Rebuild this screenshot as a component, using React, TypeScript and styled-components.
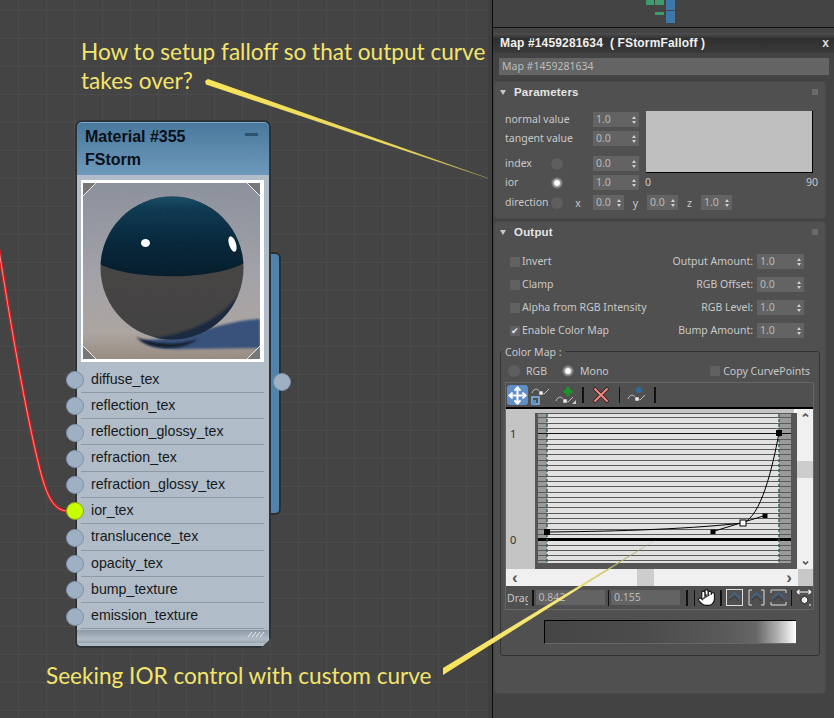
import styled, { createGlobalStyle } from 'styled-components'
import { Hand, Move } from 'lucide-react'

const GlobalStyle = createGlobalStyle`
  html, body {
    margin: 0;
    background: #444;
    overflow: hidden;
  }
  * {
    box-sizing: border-box;
  }
`

const socketNames = [
  'diffuse_tex',
  'reflection_tex',
  'reflection_glossy_tex',
  'refraction_tex',
  'refraction_glossy_tex',
  'ior_tex',
  'translucence_tex',
  'opacity_tex',
  'bump_texture',
  'emission_texture',
]

const outputRows = [
  { check: 'Invert', label: 'Output Amount:', value: '1.0', checked: false },
  { check: 'Clamp', label: 'RGB Offset:', value: '0.0', checked: false },
  { check: 'Alpha from RGB Intensity', label: 'RGB Level:', value: '1.0', checked: false },
  { check: 'Enable Color Map', label: 'Bump Amount:', value: '1.0', checked: true },
]

const gridLines = Array.from({ length: 28 }, (_, i) => Math.round(417.3 + i * 5.3) + 0.5)

const wirePath = 'M-1 250 C 10 320 25 410 40 470 C 46 492 52 511 68 511'

const Spinner = ({ value, width = 46 }: { value: string; width?: number }): JSX.Element => (
  <SpinnerBox $width={width}>
    <span>{value}</span>
    <SpinnerArrows>
      <ArrowUp />
      <ArrowDown />
    </SpinnerArrows>
  </SpinnerBox>
)

const SpherePreview = (): JSX.Element => (
  <PreviewSvg viewBox="83 183 177 176">
    <defs>
      <linearGradient id="wall" x1="0" y1="0" x2="0" y2="1">
        <stop offset="0" stopColor="#8b919d" />
        <stop offset="0.55" stopColor="#a3a2a8" />
        <stop offset="0.85" stopColor="#aca5a0" />
        <stop offset="1" stopColor="#978b80" />
      </linearGradient>
      <linearGradient id="glass" x1="0" y1="0" x2="0" y2="1">
        <stop offset="0" stopColor="#1b5472" />
        <stop offset="0.22" stopColor="#0c3850" />
        <stop offset="0.6" stopColor="#04253a" />
        <stop offset="1" stopColor="#021a29" />
      </linearGradient>
      <linearGradient id="base" x1="0" y1="0" x2="0" y2="1">
        <stop offset="0" stopColor="#494745" />
        <stop offset="1" stopColor="#403f3f" />
      </linearGradient>
      <clipPath id="ball">
        <circle cx="172" cy="268" r="71.5" />
      </clipPath>
      <filter id="soft">
        <feGaussianBlur stdDeviation="1.2" />
      </filter>
      <filter id="grain">
        <feTurbulence type="fractalNoise" baseFrequency="1.1" numOctaves="2" />
        <feColorMatrix type="saturate" values="0" />
      </filter>
    </defs>
    <rect x="83" y="183" width="177" height="176" fill="url(#wall)" />
    <path d="M140 340 C 190 340 222 320 260 319 L260 348 L185 349 C 165 350 148 348 140 340 Z" fill="#34507a" filter="url(#soft)" />
    <circle cx="172" cy="268" r="71.5" fill="url(#base)" />
    <g clipPath="url(#ball)">
      <path d="M96 262 C 125 281 215 281 246 262 L246 190 L96 190 Z" fill="url(#glass)" />
      <path d="M152 338 C 192 334 224 316 238 295 L246 330 L170 345 Z" fill="#16283c" filter="url(#soft)" />
    </g>
    <path d="M136 337 C 155 345 178 346 198 339 C 182 351 150 351 136 337 Z" fill="#0a1622" filter="url(#soft)" />
    <ellipse cx="145.5" cy="243" rx="4.5" ry="4" fill="#fff" />
    <ellipse cx="232.5" cy="244" rx="3.5" ry="8" fill="#fff" transform="rotate(-18 232.5 244)" />
    <rect x="83" y="183" width="177" height="176" filter="url(#grain)" opacity="0.05" />
    <path d="M83 183 L96 183 L83 196 Z M260 183 L247 183 L260 196 Z M83 359 L96 359 L83 346 Z M260 359 L247 359 L260 346 Z" fill="#777" />
    <path d="M96 183 L83 196 M247 183 L260 196 M96 359 L83 346 M247 359 L260 346" stroke="#eee" strokeWidth="1" />
  </PreviewSvg>
)

const CurvePlot = (): JSX.Element => (
  <PlotSvg viewBox="506 409 291 160">
    <rect x="506" y="409" width="291" height="160" fill="#c4c4c4" />
    <rect x="535" y="413" width="262" height="156" fill="#565656" />
    <rect x="794" y="409" width="3" height="4" fill="#fff" />
    <rect x="538" y="414" width="253" height="149" fill="#e2e2e2" />
    <rect x="538" y="414" width="9" height="149" fill="#9a9a9a" />
    <rect x="779" y="414" width="12" height="149" fill="#9a9a9a" />
    {gridLines.map((y) => (
      <line key={y} x1="538" x2="791" y1={y} y2={y} stroke="#5a5a5a" strokeWidth="1" />
    ))}
    <line x1="538" x2="791" y1="433.5" y2="433.5" stroke="#111" strokeWidth="1" />
    <line x1="538" x2="791" y1="539.5" y2="539.5" stroke="#000" strokeWidth="3" />
    <line x1="547" x2="547" y1="414" y2="563" stroke="#2b6060" strokeWidth="1.4" strokeDasharray="3 2" />
    <line x1="779" x2="779" y1="414" y2="563" stroke="#2b6060" strokeWidth="1.4" strokeDasharray="3 2" />
    <path d="M547 532 C 600 531.5 680 530 743 523 C 761 516 772 470 779 433" fill="none" stroke="#000" strokeWidth="1" />
    <path d="M713 531.5 L765 515.5" stroke="#000" strokeWidth="1" />
    <rect x="544" y="529" width="6" height="6" fill="#000" />
    <rect x="710.5" y="529.5" width="5" height="4.5" fill="#000" />
    <rect x="762.5" y="513.5" width="5" height="4.5" fill="#000" />
    <rect x="740" y="520" width="6" height="6" fill="#fff" stroke="#000" strokeWidth="1" />
    <rect x="776" y="430" width="6" height="6" fill="#000" />
    <text x="510" y="438" fontFamily="Noto Sans, sans-serif" fontSize="11" fill="#333">1</text>
    <text x="510" y="544" fontFamily="Noto Sans, sans-serif" fontSize="11" fill="#333">0</text>
  </PlotSvg>
)

const CurveGlyph = (): JSX.Element => (
  <>
    <path d="M1 8 C 3 3 6 3 9 7 L13 9 L18 4" fill="none" stroke="#ddd" strokeWidth="0.8" />
    <rect x="8" y="6" width="4" height="4" fill="#eee" stroke="#444" strokeWidth="0.5" />
  </>
)

const ToolbarIcons = {
  scale: (
    <svg width="18" height="20" viewBox="0 0 18 20">
      <CurveGlyph />
      <rect x="1" y="12" width="7" height="7" fill="none" stroke="#7fb2e8" strokeWidth="1.6" />
      <rect x="1" y="15" width="4" height="4" fill="#5a8fc9" />
    </svg>
  ),
  add: (
    <svg width="21" height="20" viewBox="0 0 21 20">
      <g transform="translate(0 8)">
        <CurveGlyph />
      </g>
      <path d="M11.5 2 H14.5 V5 H17.5 V8 H14.5 V11 H11.5 V8 H8.5 V5 H11.5 Z" fill="#159a22" />
      <path d="M21 15 V19 H17 Z" fill="#ccc" />
    </svg>
  ),
  remove: (
    <svg width="16" height="16" viewBox="0 0 16 16">
      <path d="M2 2 L14 14 M14 2 L2 14" stroke="#3a1a1a" strokeWidth="3.6" strokeLinecap="round" />
      <path d="M2 2 L14 14 M14 2 L2 14" stroke="#f08a80" strokeWidth="2" strokeLinecap="round" />
    </svg>
  ),
  reset: (
    <svg width="18" height="18" viewBox="0 0 18 18">
      <g transform="translate(0 5)">
        <CurveGlyph />
      </g>
      <circle cx="12" cy="4" r="3" fill="#2f6aa8" />
    </svg>
  ),
}

const ViewIcon = ({ bracket }: { bracket: boolean }): JSX.Element => (
  <svg width="17" height="17" viewBox="0 0 17 17">
    {bracket ? (
      <path d="M4 1 H1 V16 H4 M13 1 H16 V16 H13" fill="none" stroke="#ddd" strokeWidth="1" />
    ) : (
      <rect x="0.5" y="0.5" width="16" height="16" fill="none" stroke="#ddd" strokeWidth="1" />
    )}
    <path d="M3 9 L8.5 4 L14 9" fill="none" stroke="#3a6a98" strokeWidth="1.3" />
    <path d="M4 11 L8.5 7.5 L13 12" fill="none" stroke="#333" strokeWidth="1.2" strokeDasharray="1.5 1" />
  </svg>
)

const App = (): JSX.Element => {
  return (
    <Page>
      <GlobalStyle />
      <Canvas>
        <WireSvg viewBox="0 0 488 718">
          <path d={wirePath} fill="none" stroke="#c81f1f" strokeWidth="3.4" />
          <path d={wirePath} fill="none" stroke="#ff9a9a" strokeWidth="0.9" />
        </WireSvg>
        <TopNote>
          How to setup falloff so that output curve
          <br />
          takes over?
        </TopNote>
        <BottomNote>Seeking IOR control with custom curve</BottomNote>
        <Node>
          <SideTab>
            <TabSocket />
          </SideTab>
          <NodeHeader>
            <NodeTitle>Material #355</NodeTitle>
            <NodeTitle>FStorm</NodeTitle>
            <Minimize />
          </NodeHeader>
          <NodeBody>
            <PreviewFrame>
              <SpherePreview />
            </PreviewFrame>
            <SocketList>
              {socketNames.map((name) => (
                <SocketRow key={name}>
                  <Socket $active={name === 'ior_tex'} />
                  {name}
                </SocketRow>
              ))}
            </SocketList>
            <NodeGrip>
              <svg width="18" height="6" viewBox="0 0 18 6">
                <path d="M1 6 L5 1 M5 6 L9 1 M9 6 L13 1 M13 6 L17 1" stroke="#eef2f5" strokeWidth="1" />
              </svg>
            </NodeGrip>
          </NodeBody>
        </Node>
      </Canvas>
      <Gutter />
      <Panel>
        <TopBar>
          <svg width="30" height="24" viewBox="0 0 30 24">
            <rect x="0" y="0" width="8" height="5" fill="#3f9a6e" />
            <rect x="9" y="0" width="9" height="5" fill="#3f9a6e" />
            <rect x="9" y="12" width="9" height="3" fill="#3f9a6e" />
            <rect x="20" y="0" width="9" height="10" fill="#3d78a8" />
            <rect x="20" y="11" width="9" height="12" fill="#3d78a8" />
          </svg>
        </TopBar>
        <TitleBar>
          <span>Map #1459281634 &nbsp;( FStormFalloff )</span>
          <CloseMark>x</CloseMark>
        </TitleBar>
        <NameInput>Map #1459281634</NameInput>
        <Rollout $height={136}>
          <RolloutHeader>
            <Triangle />
            <RolloutTitle>Parameters</RolloutTitle>
            <Dots />
          </RolloutHeader>
          <ParamGrid>
            <LabelCell>
              <Text>normal value</Text>
            </LabelCell>
            <Spinner value="1.0" />
            <Swatch />
            <LabelCell>
              <Text>tangent value</Text>
            </LabelCell>
            <Spinner value="0.0" />
            <LabelCell>
              <RadioLabel>index</RadioLabel>
              <Radio />
            </LabelCell>
            <Spinner value="0.0" />
            <LabelCell>
              <RadioLabel>ior</RadioLabel>
              <Radio $on />
            </LabelCell>
            <Spinner value="1.0" />
            <AxisScale>
              <Text>0</Text>
              <Text>90</Text>
            </AxisScale>
          </ParamGrid>
          <DirectionRow>
            <RadioLabel>direction</RadioLabel>
            <Radio />
            <AxisLabel $width={30}>x</AxisLabel>
            <Spinner value="0.0" width={31} />
            <AxisLabel $width={23}>y</AxisLabel>
            <Spinner value="0.0" width={31} />
            <AxisLabel $width={23}>z</AxisLabel>
            <Spinner value="1.0" width={31} />
          </DirectionRow>
        </Rollout>
        <Rollout $height={471} $gap={4}>
          <RolloutHeader>
            <Triangle />
            <RolloutTitle>Output</RolloutTitle>
            <Dots />
          </RolloutHeader>
          <OutputRows>
            {outputRows.map((row) => (
              <OutputRow key={row.check}>
                <CheckLabel>
                  <Checkbox>{row.checked && '✔'}</Checkbox>
                  <Text>{row.check}</Text>
                </CheckLabel>
                <AmountField>
                  <Text>{row.label}</Text>
                  <Spinner value={row.value} width={47} />
                </AmountField>
              </OutputRow>
            ))}
          </OutputRows>
          <Group>
            <GroupLegend>Color Map :</GroupLegend>
            <ModeRow>
              <ModeOption>
                <Radio />
                <Text>RGB</Text>
              </ModeOption>
              <ModeOption>
                <Radio $on />
                <Text>Mono</Text>
              </ModeOption>
              <CopyOption>
                <Checkbox />
                <Text>Copy CurvePoints</Text>
              </CopyOption>
            </ModeRow>
            <CurveFrame>
              <Toolbar>
                <ActiveTool>
                  <Move size={19} color="#fff" strokeWidth={2.6} />
                </ActiveTool>
                <Tool $width={18} $ml={3}>{ToolbarIcons.scale}</Tool>
                <Tool $width={21} $ml={6}>{ToolbarIcons.add}</Tool>
                <Separator $ml={6} />
                <Tool $width={16} $ml={9}>{ToolbarIcons.remove}</Tool>
                <Separator $ml={10} />
                <Tool $width={18} $ml={7}>{ToolbarIcons.reset}</Tool>
                <Separator $ml={9} />
              </Toolbar>
              <ChartRow>
                <CurvePlot />
                <VScroll>
                  <ScrollArrow>⌃</ScrollArrow>
                  <VThumb />
                  <ScrollArrowDown>⌃</ScrollArrowDown>
                </VScroll>
              </ChartRow>
              <HScrollRow>
                <HTrack>
                  <HArrow>‹</HArrow>
                  <HThumb />
                  <HArrow>›</HArrow>
                </HTrack>
                <ScrollCorner />
              </HScrollRow>
              <StatusRow>
                <DragLabel>Drag</DragLabel>
                <Separator $ml={4} />
                <StatusInput>0.842</StatusInput>
                <Separator $ml={3} />
                <StatusInput>0.155</StatusInput>
                <Separator $ml={6} />
                <Separator $ml={6} />
                <HandSlot>
                  <Hand size={19} color="#111" fill="#fff" strokeWidth={1.4} />
                </HandSlot>
                <Separator $ml={4} />
                <Tool $width={17} $ml={4}><ViewIcon bracket={false} /></Tool>
                <Tool $width={17} $ml={5}><ViewIcon bracket /></Tool>
                <Tool $width={17} $ml={5}>
                  <svg width="17" height="17" viewBox="0 0 17 17">
                    <path d="M1 4 V1 H16 V4 M1 13 V16 H16 V13" fill="none" stroke="#ddd" strokeWidth="1" />
                    <path d="M2 9 L8.5 4 L15 9" fill="none" stroke="#3a6a98" strokeWidth="1.3" />
                    <path d="M4 11 L8.5 7.5 L13 12" fill="none" stroke="#333" strokeWidth="1.2" strokeDasharray="1.5 1" />
                  </svg>
                </Tool>
                <Separator $ml={4} />
                <Tool $width={16} $ml={4}>
                  <svg width="16" height="18" viewBox="0 0 16 18">
                    <path d="M1 3 H15 M1 3 L3.5 1 M1 3 L3.5 5 M15 3 L12.5 1 M15 3 L12.5 5" fill="none" stroke="#fff" strokeWidth="1.2" />
                    <circle cx="8.5" cy="11" r="3.5" fill="#eee" stroke="#222" strokeWidth="1" />
                    <circle cx="14" cy="16" r="1.2" fill="#aaa" />
                  </svg>
                </Tool>
              </StatusRow>
            </CurveFrame>
            <GradientBar />
          </Group>
        </Rollout>
      </Panel>
      <CalloutSvg viewBox="0 0 834 718">
        <defs>
          <linearGradient id="fade" x1="0" y1="0" x2="1" y2="0">
            <stop offset="0" stopColor="#f8e45c" />
            <stop offset="0.7" stopColor="#e8d65c" />
            <stop offset="1" stopColor="#a89c50" />
          </linearGradient>
          <linearGradient id="fadeUp" x1="0" y1="0" x2="1" y2="0">
            <stop offset="0" stopColor="#f8e45c" />
            <stop offset="0.6" stopColor="#f6e77a" />
            <stop offset="1" stopColor="#8d8a55" />
          </linearGradient>
        </defs>
        <polygon points="205,81 208,79 488,178 488,178.6 206,84.5" fill="url(#fade)" />
        <polygon points="443,668 657,539 443,675" fill="url(#fadeUp)" />
      </CalloutSvg>
    </Page>
  )
}

const Page = styled.div`
  position: relative;
  display: flex;
  width: 834px;
  height: 718px;
  overflow: hidden;
  background: #444;
  font-family: 'Noto Sans', 'Liberation Sans', sans-serif;
`

const Canvas = styled.div`
  position: relative;
  width: 488px;
  height: 718px;
  flex: none;
  background-color: #444;
  background-image: linear-gradient(#4b4b4b 1px, transparent 1px), linear-gradient(90deg, #4b4b4b 1px, transparent 1px);
  background-size: 28px 28px;
  background-position: 18px 10px;
`

const WireSvg = styled.svg`
  position: absolute;
  inset: 0;
  width: 488px;
  height: 718px;
`

const CalloutSvg = styled.svg`
  position: absolute;
  inset: 0;
  width: 834px;
  height: 718px;
  pointer-events: none;
`

const TopNote = styled.div`
  position: absolute;
  left: 81px;
  top: 37px;
  width: 420px;
  font-family: 'Lato', sans-serif;
  font-size: 22.6px;
  line-height: 29px;
  color: #f3e46c;
  white-space: nowrap;
`

const BottomNote = styled.div`
  position: absolute;
  left: 46px;
  top: 661px;
  font-family: 'Lato', sans-serif;
  font-size: 22.6px;
  line-height: 29px;
  color: #f3e46c;
  white-space: nowrap;
`

const Node = styled.div`
  position: absolute;
  left: 75px;
  top: 120px;
  width: 196px;
  height: 528px;
  font-family: 'Liberation Sans', sans-serif;
`

const SideTab = styled.div`
  position: absolute;
  left: 190px;
  top: 132px;
  width: 16px;
  height: 263px;
  background: #4f83ae;
  border: 2px solid #2e2e2e;
  border-left: none;
  border-radius: 0 6px 6px 0;
`

const TabSocket = styled.div`
  position: absolute;
  left: 8px;
  top: 119px;
  width: 18px;
  height: 18px;
  border-radius: 50%;
  background: #9db0c4;
  border: 1px solid #7f92a8;
`

const NodeHeader = styled.div`
  position: relative;
  height: 55px;
  padding: 3px 0 0 8px;
  background: linear-gradient(#47789c, #6e99ba);
  border: 2px solid #2e3338;
  border-bottom: none;
  border-radius: 7px 7px 0 0;
  box-shadow: inset 0 1px 0 #7ea6c6;
`

const NodeTitle = styled.div`
  font-size: 16px;
  font-weight: bold;
  line-height: 23px;
  color: #0a0f18;
`

const Minimize = styled.div`
  position: absolute;
  right: 11px;
  top: 11px;
  width: 13px;
  height: 3px;
  background: #2c5370;
`

const NodeBody = styled.div`
  position: relative;
  height: 473px;
  padding-top: 5px;
  background: #b0bcc7;
  border: 2px solid #2e3338;
  border-top: none;
  border-radius: 0 0 4px 6px;
  clip-path: polygon(-12px 0, 100% 0, 100% calc(100% - 10px), calc(100% - 10px) 100%, -12px 100%);
`

const PreviewFrame = styled.div`
  width: 183px;
  height: 182px;
  margin-left: 4px;
  border-style: solid;
  border-color: #fff;
  border-width: 3px 4px 3px 2px;
  background: #fff;
`

const PreviewSvg = styled.svg`
  display: block;
  width: 177px;
  height: 176px;
`

const SocketList = styled.div`
  margin: 4.5px 0 0 4px;
  width: 183px;
`

const SocketRow = styled.div`
  position: relative;
  height: 26.3px;
  padding-left: 10px;
  line-height: 25px;
  font-size: 14.2px;
  color: #16191c;
  border-bottom: 1.5px solid #8d99a5;
`

const Socket = styled.span<{ $active?: boolean }>`
  position: absolute;
  left: -15px;
  top: 4.5px;
  width: 18px;
  height: 18px;
  border-radius: 50%;
  background: ${({ $active }) => ($active ? '#c8ff00' : '#9db0c4')};
  border: 1px solid ${({ $active }) => ($active ? '#8aa520' : '#7f92a8')};
`

const NodeGrip = styled.div`
  display: flex;
  justify-content: flex-end;
  align-items: flex-start;
  height: 13px;
  margin: 0.5px 0 0;
  padding: 1px 4px 0 0;
  background: linear-gradient(#8d99a5, #b0bcc7 70%, #98a4b0);
`

const Gutter = styled.div`
  width: 4px;
  flex: none;
  background: #3f3f3f;
`

const Panel = styled.div`
  width: 342px;
  flex: none;
  height: 718px;
  background: #434343;
  border-left: 1px solid #0a0a0a;
  color: #c8c8c8;
  font-size: 10.5px;
`

const TopBar = styled.div`
  display: flex;
  height: 28px;
  padding-left: 153px;
  background: #444;
  border-bottom: 1px solid #111;
`

const TitleBar = styled.div`
  display: flex;
  justify-content: space-between;
  align-items: center;
  height: 20px;
  margin-top: 5px;
  padding: 0 5px 0 7px;
  background: linear-gradient(#505050, #2f2f2f 30%, #3a3a3a);
  font-family: 'Liberation Sans', sans-serif;
  font-size: 12px;
  font-weight: bold;
  letter-spacing: 0.15px;
  color: #f0f0f0;
  white-space: pre;
`

const CloseMark = styled.span`
  font-size: 12px;
  color: #ddd;
`

const NameInput = styled.div`
  height: 17px;
  margin: 5px 5px 0 6px;
  padding-left: 3px;
  background: #646464;
  color: #bdbdbd;
  font-size: 10.5px;
  line-height: 17px;
`

const Rollout = styled.div<{ $height: number; $gap?: number }>`
  width: 330px;
  height: ${({ $height }) => $height}px;
  margin: ${({ $gap }) => $gap ?? 7}px 0 0 2px;
  background: #505050;
  border-radius: 3px;
  box-shadow: 0 0 0 1px #4a4a4a;
`

const RolloutHeader = styled.div`
  display: flex;
  align-items: center;
  height: 20px;
  padding: 0 7px 0 5px;
`

const Triangle = styled.span`
  width: 0;
  height: 0;
  border-left: 3px solid transparent;
  border-right: 3px solid transparent;
  border-top: 5px solid #c8c8c8;
`

const RolloutTitle = styled.span`
  flex: 1;
  margin-left: 8px;
  font-family: 'Liberation Sans', sans-serif;
  font-size: 11.5px;
  font-weight: bold;
  letter-spacing: 0.2px;
  color: #e4e4e4;
`

const Dots = styled.span`
  width: 6px;
  height: 6px;
  background-image: radial-gradient(circle, #8a8a8a 0.6px, transparent 0.8px);
  background-size: 2px 2px;
`

const ParamGrid = styled.div`
  display: grid;
  grid-template-columns: 88px 46px 179px;
  grid-template-rows: 19px 25px 19px 20px;
  margin: 10px 0 0 10px;
  align-items: start;
`

const LabelCell = styled.div`
  display: flex;
  align-items: center;
  height: 15px;
  white-space: nowrap;
`

const Text = styled.span`
  line-height: 15px;
  white-space: nowrap;
`

const RadioLabel = styled.span`
  width: 46px;
  flex: none;
  line-height: 15px;
`

const Radio = styled.span<{ $on?: boolean }>`
  display: block;
  flex: none;
  width: 12px;
  height: 12px;
  border-radius: 50%;
  background: ${({ $on }) => ($on ? 'radial-gradient(#fff 28%, #a0a0a0 42%, #5e5e5e 68%)' : '#5e5e5e')};
`

const Swatch = styled.div`
  grid-column: 3;
  grid-row: 1 / 4;
  width: 167px;
  height: 62px;
  margin: -1px 0 0 7px;
  background: #bfbfbf;
  border-right: 1px solid #000;
  border-bottom: 1px solid #000;
`

const AxisScale = styled.div`
  display: flex;
  justify-content: space-between;
  padding-left: 6px;
  height: 15px;
`

const DirectionRow = styled.div`
  display: flex;
  align-items: center;
  margin-left: 10px;
  height: 15px;
`

const AxisLabel = styled.span<{ $width: number }>`
  width: ${({ $width }) => $width}px;
  text-align: center;
`

const SpinnerBox = styled.div<{ $width: number }>`
  display: flex;
  justify-content: space-between;
  align-items: center;
  width: ${({ $width }) => $width}px;
  height: 15px;
  padding: 0 3px;
  background: #636363;
  color: #b8b8b8;
  font-size: 10.5px;
  line-height: 15px;
`

const SpinnerArrows = styled.span`
  display: flex;
  flex-direction: column;
  gap: 2px;
`

const ArrowUp = styled.i`
  display: block;
  border-left: 2.5px solid transparent;
  border-right: 2.5px solid transparent;
  border-bottom: 3px solid #d0d0d0;
`

const ArrowDown = styled.i`
  display: block;
  border-left: 2.5px solid transparent;
  border-right: 2.5px solid transparent;
  border-top: 3px solid #d0d0d0;
`

const OutputRows = styled.div`
  margin-top: 12px;
  padding: 0 21px 0 15px;
`

const OutputRow = styled.div`
  display: flex;
  justify-content: space-between;
  align-items: flex-start;
  height: 23px;
`

const CheckLabel = styled.label`
  display: flex;
  align-items: center;
  gap: 2px;
  height: 15px;
`

const Checkbox = styled.span`
  display: flex;
  align-items: center;
  justify-content: center;
  width: 10px;
  height: 10px;
  background: #616161;
  color: #e8e8e8;
  font-size: 9px;
  line-height: 10px;
`

const AmountField = styled.div`
  display: flex;
  align-items: center;
  gap: 4px;
  height: 15px;
`

const Group = styled.div`
  position: relative;
  width: 320px;
  height: 305px;
  margin: 5px 0 0 5px;
  padding: 11px 0 0 4px;
  border: 1px solid #333;
  border-radius: 3px;
`

const GroupLegend = styled.span`
  position: absolute;
  left: 2px;
  top: -7px;
  padding: 0 3px 0 2px;
  background: #505050;
  line-height: 14px;
`

const ModeRow = styled.div`
  display: flex;
  align-items: center;
  width: 308px;
  height: 16px;
  margin-bottom: 3px;
  padding: 0 3px;
`

const ModeOption = styled.div`
  display: flex;
  align-items: center;
  gap: 6px;
  width: 54px;
`

const CopyOption = styled.div`
  display: flex;
  align-items: center;
  gap: 3px;
  margin-left: auto;
`

const CurveFrame = styled.div`
  width: 309px;
  height: 228px;
  border: 1px solid #666;
`

const Toolbar = styled.div`
  display: flex;
  align-items: center;
  height: 24px;
  padding-left: 1px;
  background: #505050;
`

const ActiveTool = styled.div`
  display: flex;
  align-items: center;
  justify-content: center;
  width: 21px;
  height: 20px;
  background: #5f8fc6;
  border-radius: 3px;
`

const Tool = styled.div<{ $width: number; $ml: number }>`
  display: flex;
  align-items: center;
  justify-content: center;
  flex: none;
  width: ${({ $width }) => $width}px;
  margin-left: ${({ $ml }) => $ml}px;
`

const Separator = styled.span<{ $ml: number }>`
  flex: none;
  width: 1.5px;
  height: 16px;
  margin-left: ${({ $ml }) => $ml}px;
  background: #111;
`

const ChartRow = styled.div`
  display: flex;
  height: 162px;
  border-top: 2px solid #000;
`

const PlotSvg = styled.svg`
  display: block;
  width: 291px;
  height: 160px;
  flex: none;
`

const VScroll = styled.div`
  position: relative;
  display: flex;
  flex-direction: column;
  justify-content: space-between;
  align-items: center;
  flex: 1;
  background: #f0f0f0;
`

const ScrollArrow = styled.span`
  height: 14px;
  color: #555;
  font-size: 13px;
  font-weight: bold;
  line-height: 18px;
`

const ScrollArrowDown = styled(ScrollArrow)`
  transform: rotate(180deg);
`

const VThumb = styled.div`
  position: absolute;
  top: 52px;
  width: 100%;
  height: 17px;
  background: #cdcdcd;
`

const HScrollRow = styled.div`
  display: flex;
  height: 17px;
`

const HTrack = styled.div`
  position: relative;
  display: flex;
  justify-content: space-between;
  align-items: center;
  flex: 1;
  padding: 0 6px;
  background: #f0f0f0;
`

const HArrow = styled.span`
  color: #555;
  font-family: 'Liberation Sans', sans-serif;
  font-size: 17px;
  font-weight: bold;
  line-height: 17px;
`

const HThumb = styled.div`
  position: absolute;
  left: 131px;
  top: 0;
  width: 17px;
  height: 100%;
  background: #cdcdcd;
`

const ScrollCorner = styled.div`
  width: 15px;
  background: #c8c8c8;
`

const StatusRow = styled.div`
  display: flex;
  align-items: center;
  height: 23px;
  padding-left: 1px;
  background: #505050;
`

const DragLabel = styled.span`
  width: 21px;
  overflow: hidden;
  white-space: nowrap;
  color: #c8c8c8;
`

const StatusInput = styled.div`
  width: 69px;
  height: 15px;
  margin-left: 2px;
  padding-left: 3px;
  background: #636363;
  color: #b8b8b8;
  line-height: 15px;
`

const HandSlot = styled.div`
  display: flex;
  justify-content: center;
  width: 20px;
  margin-left: 1px;
`

const GradientBar = styled.div`
  width: 252px;
  height: 24px;
  margin: 10px 0 0 39px;
  background: linear-gradient(90deg, #454545, #4c4c4c 40%, #5a5a5a 72%, #666 84%, #aaa 92%, #fff 100%);
  border-top: 1px solid #000;
  border-left: 1px solid #000;
  border-bottom: 1px solid #666;
`

export default App
